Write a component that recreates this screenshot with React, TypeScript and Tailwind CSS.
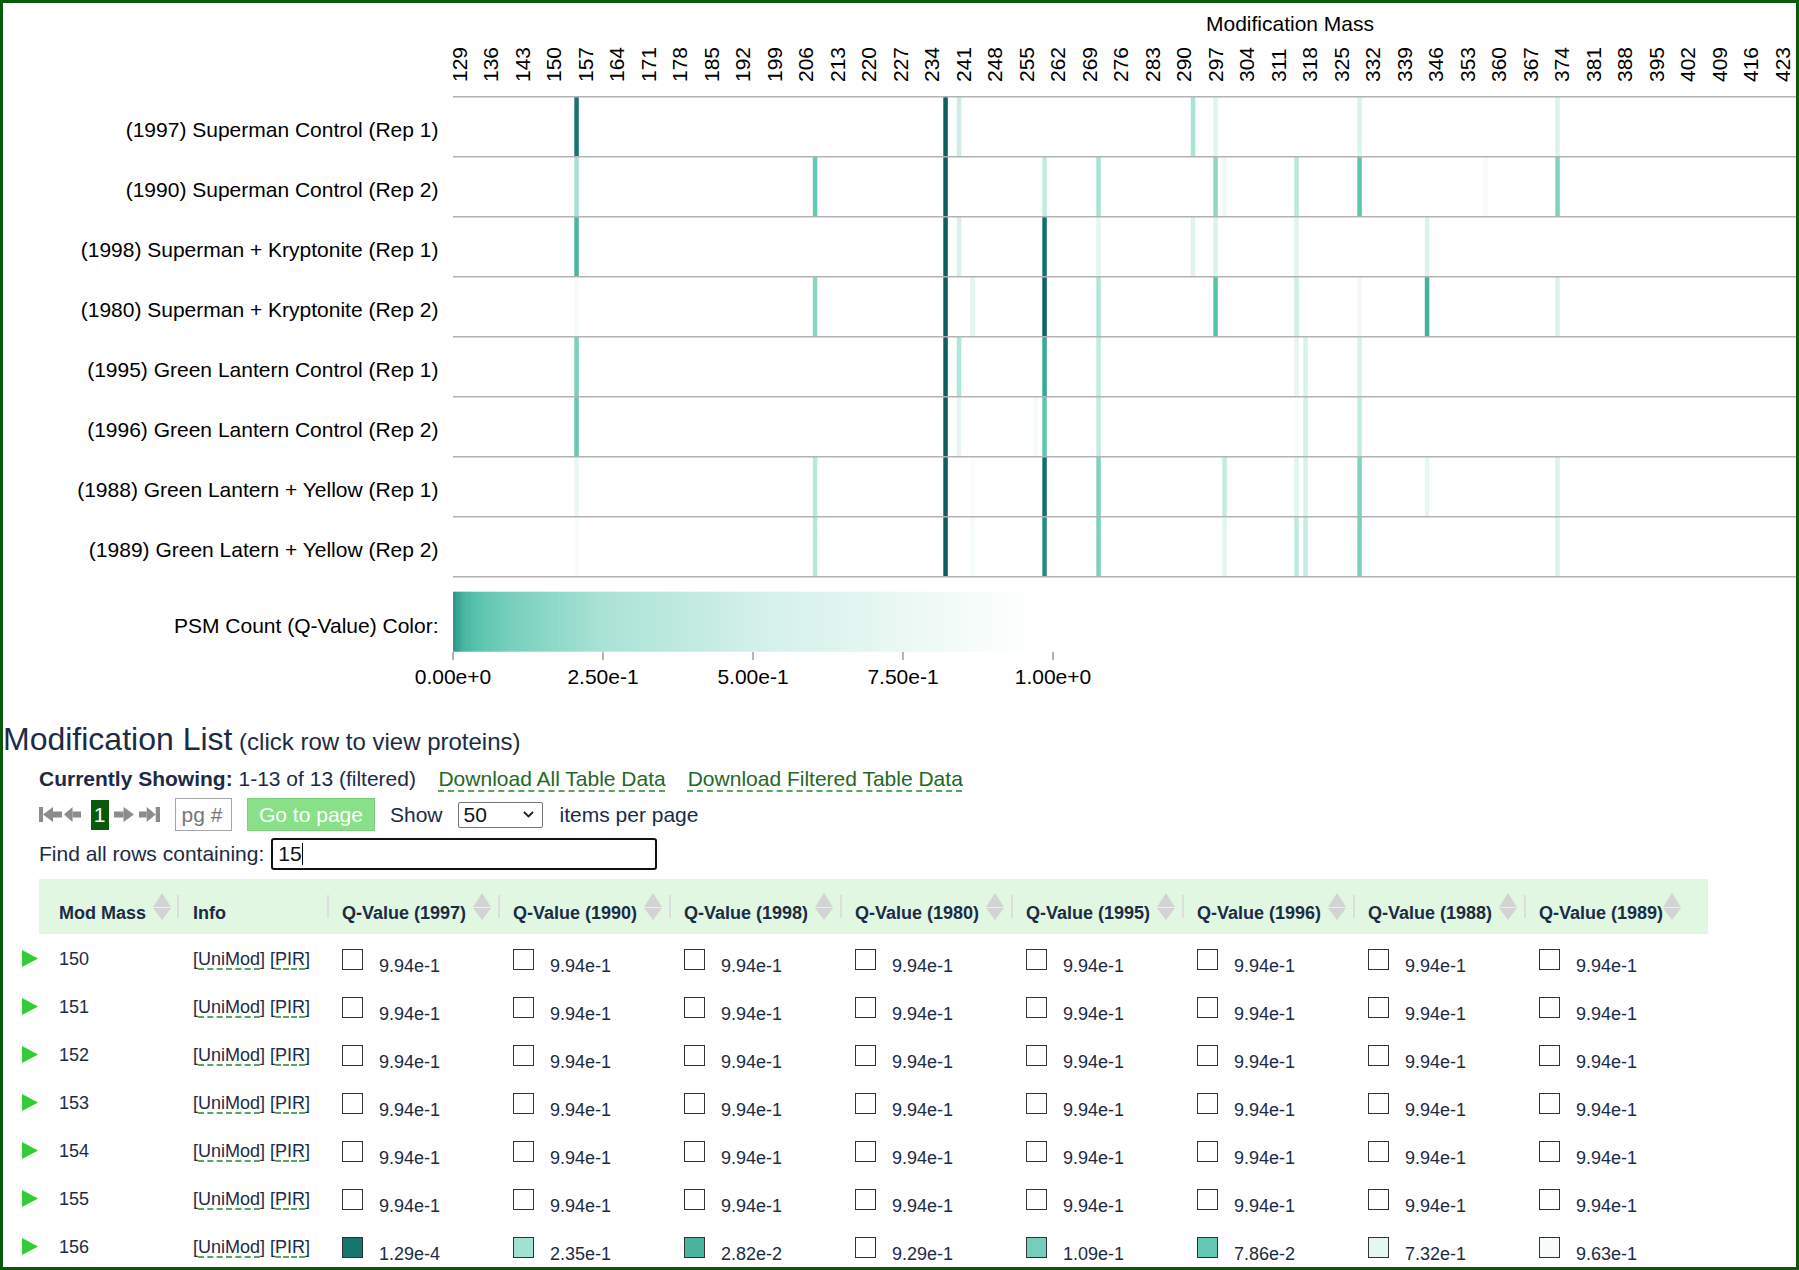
import React from "react";

const ROW_TOP = 96.7;
const RH = 60;
const X0 = 452.8;
const BW = 4.5;

const rowLabels = [
  "(1997) Superman Control (Rep 1)",
  "(1990) Superman Control (Rep 2)",
  "(1998) Superman + Kryptonite (Rep 1)",
  "(1980) Superman + Kryptonite (Rep 2)",
  "(1995) Green Lantern Control (Rep 1)",
  "(1996) Green Lantern Control (Rep 2)",
  "(1988) Green Lantern + Yellow (Rep 1)",
  "(1989) Green Latern + Yellow (Rep 2)",
];

const D0 = "#0b5f5f";
const bars: [number, string][][] = [
  [[156, "#177570"], [238, D0], [241, "#cdeee6"], [293, "#a9e3d6"], [298, "#e0f5ef"], [330, "#dcf3ed"], [374, "#dbf3ec"]],
  [[156, "#a5e1d4"], [209, "#67c9b5"], [238, D0], [260, "#c3ebe2"], [272, "#a8e2d5"], [298, "#8fd6c6"], [300, "#eef9f6"], [316, "#b9e8dc"], [330, "#5ec6ae"], [358, "#f7fbfa"], [374, "#80d3c1"]],
  [[156, "#4ab5a0"], [238, D0], [241, "#d8f2eb"], [260, "#137070"], [272, "#e4f6f1"], [293, "#dff4ee"], [298, "#dcf3ed"], [316, "#e2f5f0"], [345, "#daf3ec"]],
  [[156, "#f5fbfa"], [209, "#8ad6c4"], [238, D0], [244, "#e3f6f1"], [260, "#0e6363"], [272, "#b1e5d9"], [298, "#55c2aa"], [316, "#cdefe6"], [330, "#f0faf7"], [345, "#45b09c"], [374, "#dbf3ec"]],
  [[156, "#78d0bd"], [238, D0], [241, "#b0e6da"], [260, "#3aa898"], [272, "#c3ebe2"], [316, "#e5f6f1"], [318, "#d6f2eb"], [330, "#d6f2eb"]],
  [[156, "#66c8b3"], [238, D0], [241, "#e6f7f2"], [258, "#f5fbfa"], [260, "#5ec6ae"], [272, "#c3ebe2"], [316, "#fafdfc"], [318, "#d3f1e9"], [330, "#c2ebe1"]],
  [[156, "#eaf7f3"], [209, "#b8e8dc"], [238, D0], [244, "#f8fcfb"], [260, "#136e6e"], [272, "#80d3c1"], [300, "#c3ebe2"], [316, "#e2f5f0"], [318, "#d6f2eb"], [330, "#80d3c1"], [345, "#e6f7f2"], [374, "#dbf3ec"]],
  [[156, "#f7fcfb"], [209, "#b5e7da"], [238, D0], [244, "#f5fbfa"], [260, "#2a8c80"], [272, "#7ad1be"], [300, "#e4f6f1"], [316, "#c0eadf"], [318, "#c5ece2"], [330, "#78d0bd"], [374, "#dbf3ec"]],
];

const stops: [number, string][] = [
  [0, "#2a9584"],
  [0.02, "#4cb9a3"],
  [0.05, "#5fc6b0"],
  [0.1, "#78d0bd"],
  [0.25, "#aae3d6"],
  [0.5, "#d2f0e8"],
  [0.75, "#eaf8f4"],
  [0.97, "#ffffff"],
  [1, "#ffffff"],
];

function hex(c: string) {
  return [1, 3, 5].map((i) => parseInt(c.slice(i, i + 2), 16));
}
function interp(q: number) {
  for (let i = 0; i < stops.length - 1; i++) {
    const [a, ca] = stops[i];
    const [b, cb] = stops[i + 1];
    if (q >= a && q <= b) {
      const t = (q - a) / (b - a);
      const A = hex(ca);
      const B = hex(cb);
      const r = A.map((v, k) => Math.round(v + (B[k] - v) * t));
      return `rgb(${r[0]},${r[1]},${r[2]})`;
    }
  }
  return "#ffffff";
}

const ticks: number[] = [];
for (let m = 129; m <= 423; m += 7) ticks.push(m);

function Chart() {
  const legend = [];
  for (let i = 0; i < 200; i++) {
    const q = (i + 0.5) / 200;
    legend.push(<rect key={i} x={453 + i * 3} y={591.7} width={3.3} height={60} fill={interp(q)} />);
  }
  return (
    <svg width="1793" height="720" viewBox="3 3 1793 720" className="block">
      <text x={1290} y={30.5} textAnchor="middle" fontSize={21} fill="#000">
        Modification Mass
      </text>
      {ticks.map((m) => {
        const cx = X0 + (m - 129) * BW + BW / 2;
        return (
          <text key={m} transform={`translate(${cx + 11.5},82) rotate(-90)`} fontSize={21} fill="#000">
            {m}
          </text>
        );
      })}
      {rowLabels.map((l, i) => (
        <text key={l} x={438.5} y={ROW_TOP + RH * i + 40} textAnchor="end" fontSize={21} fill="#000">
          {l}
        </text>
      ))}
      {bars.map((row, r) =>
        row.map(([m, c]) => (
          <rect key={`${r}-${m}`} x={X0 + (m - 129) * BW} y={ROW_TOP + RH * r} width={BW} height={RH} fill={c} />
        ))
      )}
      {Array.from({ length: 9 }).map((_, i) => (
        <line key={i} x1={453} x2={1796} y1={ROW_TOP + RH * i} y2={ROW_TOP + RH * i} stroke="#b3b3b3" strokeWidth={1.5} />
      ))}
      <text x={438.5} y={633} textAnchor="end" fontSize={21} fill="#000">
        PSM Count (Q-Value) Color:
      </text>
      {legend}
      {["0.00e+0", "2.50e-1", "5.00e-1", "7.50e-1", "1.00e+0"].map((t, k) => (
        <g key={t}>
          <line x1={453 + 150 * k} x2={453 + 150 * k} y1={652} y2={660} stroke="#9a9a9a" strokeWidth={1.5} />
          <text x={453 + 150 * k} y={684} textAnchor="middle" fontSize={21} fill="#000">
            {t}
          </text>
        </g>
      ))}
    </svg>
  );
}

function Arrows() {
  return (
    <svg width="18" height="27" className="shrink-0">
      <polygon points="0,14 9,0 18,14" fill="#d3d3d3" />
      <polygon points="0,15 18,15 9,27" fill="#d3d3d3" />
    </svg>
  );
}

function Sep() {
  return <span className="block w-[1.5px] h-[23px] bg-[#dddddd] shrink-0" />;
}

const qHeads = ["1997", "1990", "1998", "1980", "1995", "1996", "1988", "1989"];

function Square({ c }: { c: string }) {
  return <span className="block w-[21px] h-[21px] border-[1.5px] border-[#333333] shrink-0" style={{ backgroundColor: c }} />;
}

type Row = { mass: number; vals: [string, string][] };
const W: [string, string] = ["9.94e-1", "#ffffff"];
const rows: Row[] = [150, 151, 152, 153, 154, 155].map((m) => ({ mass: m, vals: Array.from({ length: 8 }, () => W) }));
rows.push({
  mass: 156,
  vals: [
    ["1.29e-4", "#177570"],
    ["2.35e-1", "#a3dfd2"],
    ["2.82e-2", "#48b39f"],
    ["9.29e-1", "#ffffff"],
    ["1.09e-1", "#76cdbb"],
    ["7.86e-2", "#66c8b3"],
    ["7.32e-1", "#e6f6f1"],
    ["9.63e-1", "#f8fcfb"],
  ],
});

function QCell({ v, c, last }: { v: string; c: string; last?: boolean }) {
  return (
    <div className={last ? "w-[184px] shrink-0 flex items-start pl-[15px] pt-[15px]" : "w-[171px] shrink-0 flex items-start pl-[15px] pt-[15px]"}>
      <Square c={c} />
      <span className="ml-[16px] mt-[8px] leading-[18px]">{v}</span>
    </div>
  );
}

const link = "underline decoration-dashed decoration-[#5aa55a] underline-offset-[4px]";

export default function App() {
  return (
    <div className="w-[1799px] h-[1270px] overflow-hidden border-[3px] border-[#0b5a0b] bg-white font-['Liberation_Sans',Arial,sans-serif] text-[#1c2b45]">
      <Chart />
      <div className="h-[36px] leading-[32px] text-[32px] whitespace-nowrap">
        Modification List<span className="text-[24px]"> (click row to view proteins)</span>
      </div>

      <div className="mt-[8px] ml-[36px] h-[24px] text-[21px] leading-[24px] whitespace-nowrap">
        <span className="font-bold">Currently Showing:</span> 1-13 of 13 (filtered)
        <span className={`ml-[22.5px] text-[#246824] ${link}`}>Download All Table Data</span>
        <span className={`ml-[22px] text-[#246824] ${link}`}>Download Filtered Table Data</span>
      </div>

      <div className="mt-[7px] ml-[36px] h-[33px] flex items-center text-[21px] whitespace-nowrap">
        <svg width="23" height="15" className="shrink-0">
          <rect x="0" y="0" width="4" height="15" fill="#8c8c8c" />
          <polygon points="4,7.5 14,0 14,15" fill="#8c8c8c" />
          <rect x="14" y="4.5" width="9" height="6" fill="#8c8c8c" />
        </svg>
        <svg width="17" height="15" className="ml-[1.5px] shrink-0">
          <polygon points="0,7.5 8.5,0 8.5,15" fill="#8c8c8c" />
          <rect x="8.5" y="4.5" width="8.5" height="6" fill="#8c8c8c" />
        </svg>
        <div className="ml-[10px] w-[18px] h-[30px] bg-[#0b5a0b] text-white flex items-center justify-center leading-none">1</div>
        <svg width="20" height="15" className="ml-[5.5px] shrink-0">
          <rect x="0" y="4.5" width="9.5" height="6" fill="#8c8c8c" />
          <polygon points="9.5,0 20,7.5 9.5,15" fill="#8c8c8c" />
        </svg>
        <svg width="21" height="15" className="ml-[5px] shrink-0">
          <rect x="0" y="4.5" width="7.7" height="6" fill="#8c8c8c" />
          <polygon points="7.7,0 16.7,7.5 7.7,15" fill="#8c8c8c" />
          <rect x="16.7" y="0" width="4.3" height="15" fill="#8c8c8c" />
        </svg>
        <div className="ml-[14.5px] w-[57px] h-[33px] border border-[#a6a6a6] text-[#767676] pl-[6px] flex items-center">pg #</div>
        <div className="ml-[15.5px] w-[128px] h-[33px] bg-[#88e088] border border-[#7ccf7c] text-white pl-[11px] flex items-center">Go to page</div>
        <span className="ml-[15px]">Show</span>
        <div className="ml-[15px] w-[85px] h-[26px] border border-[#767676] rounded-[2px] flex items-center justify-between pl-[5px] pr-[8px] text-[#111]">
          <span>50</span>
          <svg width="11" height="7">
            <polyline points="1,1 5.5,5.5 10,1" fill="none" stroke="#222" strokeWidth="1.8" />
          </svg>
        </div>
        <span className="ml-[17px]">items per page</span>
      </div>

      <div className="mt-[7px] ml-[36px] h-[32px] flex items-center text-[21px] whitespace-nowrap">
        <span>Find all rows containing:</span>
        <div className="ml-[7px] w-[386px] h-[32px] border-2 border-[#111] rounded-[3px] flex items-center pl-[5px] text-[#111]">
          15<span className="block w-px h-[22px] bg-black" />
        </div>
      </div>

      <div className="mt-[9px]">
        <div className="ml-[36px] flex h-[55px] w-[1669px] bg-[#e1f7e1] text-[18px] font-bold whitespace-nowrap">
          <div className="w-[138px] shrink-0 flex items-center justify-between pl-[20px] pr-[6px]">
            <span className="mt-[12px] leading-[18px]">Mod Mass</span>
            <Arrows />
          </div>
          <div className="w-[150px] shrink-0 flex items-center">
            <Sep />
            <span className="ml-[14.5px] mt-[12px] leading-[18px]">Info</span>
          </div>
          {qHeads.map((h, i) =>
            i < 7 ? (
              <div key={h} className="w-[171px] shrink-0 flex items-center pr-[7px]">
                <Sep />
                <span className="ml-[13.5px] mt-[12px] leading-[18px]">Q-Value ({h})</span>
                <span className="ml-auto">
                  <Arrows />
                </span>
              </div>
            ) : (
              <div key={h} className="w-[184px] shrink-0 flex items-center">
                <Sep />
                <span className="ml-[13.5px] mt-[12px] leading-[18px]">Q-Value ({h})</span>
                <Arrows />
              </div>
            )
          )}
        </div>

        {rows.map((r) => (
          <div key={r.mass} className="ml-[19px] flex h-[48px] text-[18px] whitespace-nowrap">
            <svg width="17" height="17" className="mt-[16px] shrink-0">
              <polygon points="0,0 16,8.5 0,17" fill="#33cc33" />
            </svg>
            <div className="w-[138px] shrink-0 pl-[20px] pt-[16px] leading-[18px]">{r.mass}</div>
            <div className="w-[150px] shrink-0 pl-[16px] pt-[16px] leading-[18px]">
              [<span className={link}>UniMod</span>] [<span className={link}>PIR</span>]
            </div>
            {r.vals.map(([v, c], i) => (
              <QCell key={i} v={v} c={c} last={i === 7} />
            ))}
          </div>
        ))}
      </div>
    </div>
  );
}
